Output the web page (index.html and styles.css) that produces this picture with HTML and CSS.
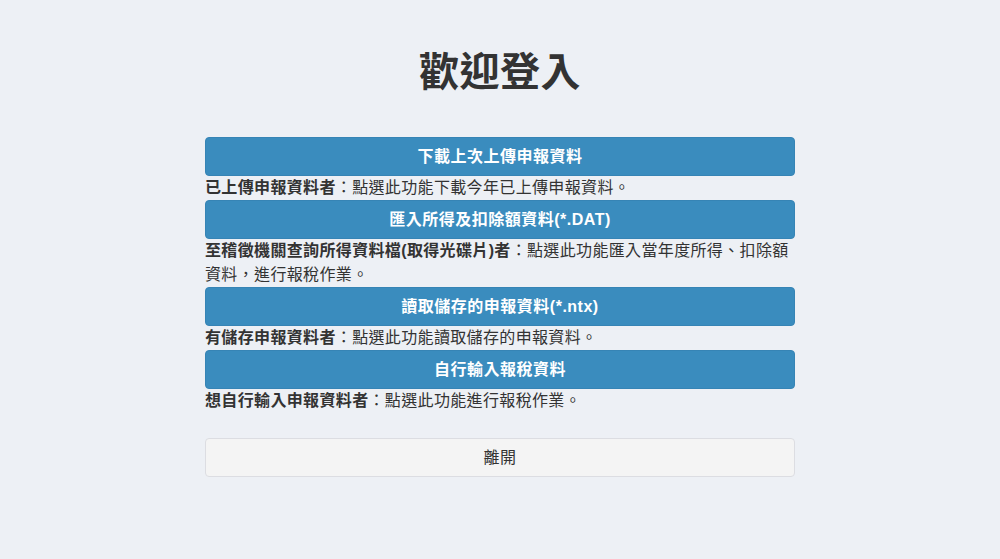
FILE: index.html
```html
<!DOCTYPE html>
<html lang="zh-Hant">
<head>
<meta charset="utf-8">
<title>歡迎登入</title>
<link rel="stylesheet" href="styles.css">
</head>
<body>
<main class="wrap">
  <h1 class="title">歡迎登入</h1>
  <div class="options">
    <button class="btn btn-primary">下載上次上傳申報資料</button>
    <p class="desc"><b>已上傳申報資料者</b>：點選此功能下載今年已上傳申報資料。</p>
    <button class="btn btn-primary">匯入所得及扣除額資料(*.DAT)</button>
    <p class="desc"><b>至稽徵機關查詢所得資料檔(取得光碟片)者</b>：點選此功能匯入當年度所得、扣除額資料，進行報稅作業。</p>
    <button class="btn btn-primary">讀取儲存的申報資料(*.ntx)</button>
    <p class="desc"><b>有儲存申報資料者</b>：點選此功能讀取儲存的申報資料。</p>
    <button class="btn btn-primary">自行輸入報稅資料</button>
    <p class="desc"><b>想自行輸入申報資料者</b>：點選此功能進行報稅作業。</p>
    <button class="btn btn-default">離開</button>
  </div>
</main>
</body>
</html>
```
FILE: styles.css
```css
html, body {
  margin: 0;
  padding: 0;
  background: #edf0f5;
}
body {
  font-family: "Helvetica Neue", "Liberation Sans", "Noto Sans CJK TC", sans-serif;
  color: #333;
}
.wrap {
  width: 590px;
  margin: 0 auto;
  padding-top: 50px;
}
.title {
  margin: 0 0 43px;
  font-size: 40px;
  line-height: 44px;
  font-weight: 700;
  text-align: center;
  color: #333;
  letter-spacing: 0.5px;
}
.options {
  display: flex;
  flex-direction: column;
}
.btn {
  display: block;
  width: 100%;
  box-sizing: border-box;
  padding: 8px 12px;
  font-family: inherit;
  font-size: 16px;
  line-height: 21px;
  letter-spacing: 0.5px;
  border-radius: 4px;
  border: 1px solid transparent;
  text-align: center;
  cursor: pointer;
}
.btn-primary {
  background: #3a8cbe;
  border-color: #3684b5;
  color: #fff;
  font-weight: 600;
}
.btn-default {
  margin-top: 25px;
  background: #f4f4f4;
  border-color: #dcdde2;
  color: #333;
}
.desc {
  margin: 0;
  font-size: 16px;
  line-height: 24px;
  letter-spacing: 0.35px;
  color: #333;
}
.desc b {
  font-weight: 700;
}
```
